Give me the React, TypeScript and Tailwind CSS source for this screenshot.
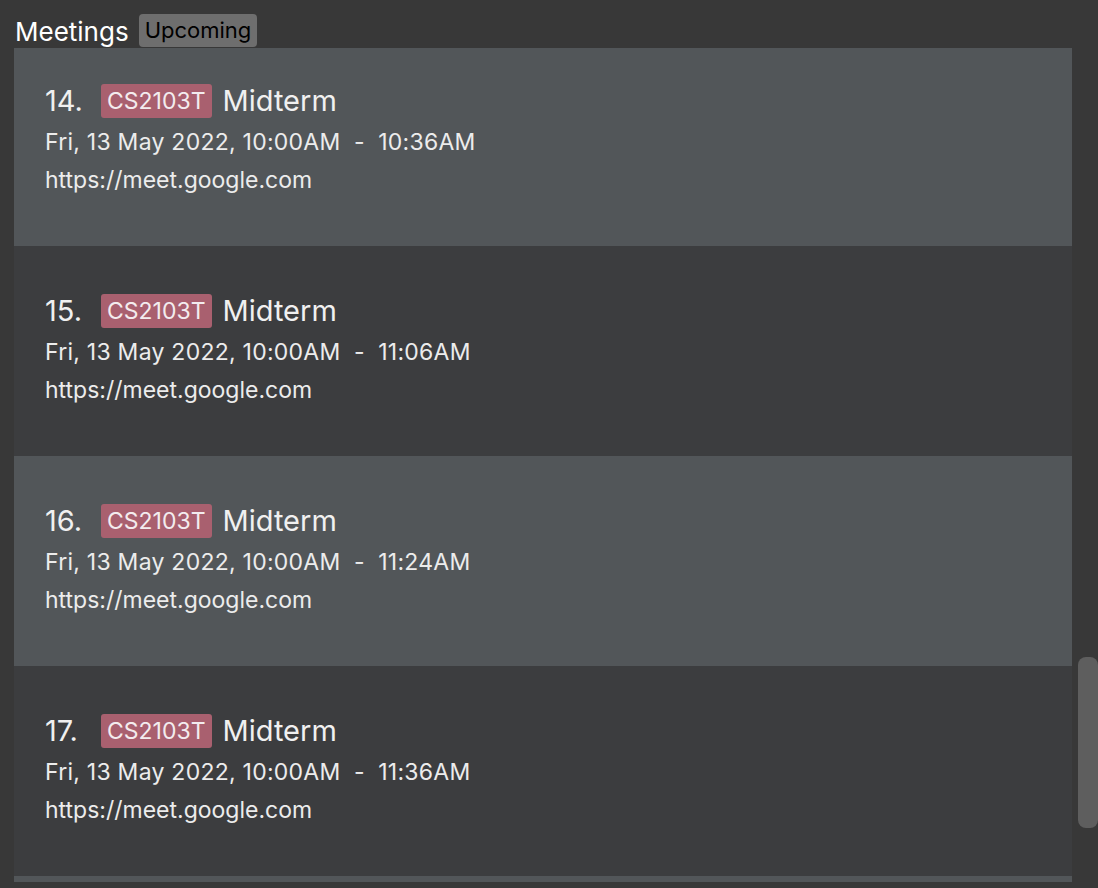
import React from 'react';

interface Meeting {
  index: number;
  module: string;
  title: string;
  date: string;
  start: string;
  end: string;
  link: string;
}

const meetings: Meeting[] = [
  { index: 14, module: 'CS2103T', title: 'Midterm', date: 'Fri, 13 May 2022', start: '10:00AM', end: '10:36AM', link: 'https://meet.google.com' },
  { index: 15, module: 'CS2103T', title: 'Midterm', date: 'Fri, 13 May 2022', start: '10:00AM', end: '11:06AM', link: 'https://meet.google.com' },
  { index: 16, module: 'CS2103T', title: 'Midterm', date: 'Fri, 13 May 2022', start: '10:00AM', end: '11:24AM', link: 'https://meet.google.com' },
  { index: 17, module: 'CS2103T', title: 'Midterm', date: 'Fri, 13 May 2022', start: '10:00AM', end: '11:36AM', link: 'https://meet.google.com' },
];

function MeetingCard({ meeting, odd }: { meeting: Meeting; odd: boolean }) {
  return (
    <div className={`h-[210px] shrink-0 pl-[31px] pt-[45px] ${odd ? 'bg-[#3c3d3f]' : 'bg-[#525659]'}`}>
      <div className="flex h-[40px] items-center">
        <span className="w-[56px] text-[29px] text-[#f0f0f0]">{meeting.index}.</span>
        <span className="rounded-[3px] bg-[#a9606f] px-[6px] text-[23px] leading-[34px] text-[#f3ecee]">
          {meeting.module}
        </span>
        <span className="ml-[11px] text-[29px] text-[#f0f0f0]">{meeting.title}</span>
      </div>
      <div className="mt-[2px] text-[23px] leading-[38px] tracking-[0.25px] text-[#ececec]">
        {meeting.date}, {meeting.start}&nbsp;&nbsp;-&nbsp;&nbsp;{meeting.end}
      </div>
      <div className="text-[23px] leading-[38px] text-[#ececec]">{meeting.link}</div>
    </div>
  );
}

export default function App() {
  return (
    <div className="flex h-[888px] w-[1098px] flex-col overflow-hidden bg-[#383838] font-['Inter',sans-serif]">
      {/* Header */}
      <div className="flex h-[48px] items-end pl-[15px]">
        <span className="text-[26px] leading-[32px] text-white">Meetings</span>
        <span className="mb-[1px] ml-[10px] rounded-[4px] bg-[#6e6e6e] px-[6px] text-[22px] leading-[33px] text-black">
          Upcoming
        </span>
      </div>

      {/* List + scrollbar */}
      <div className="flex h-[834px]">
        <div className="ml-[14px] flex w-[1058px] flex-col overflow-hidden">
          <div className="-mt-[12px] flex flex-col">
            {meetings.map((m, i) => (
              <MeetingCard key={m.index} meeting={m} odd={i % 2 === 1} />
            ))}
            {/* top edge of the next card, scrolled out of view */}
            <div className="h-[6px] shrink-0 bg-[#525659]" />
          </div>
        </div>
        <div className="flex w-[26px] justify-end">
          <div className="mt-[609px] h-[171px] w-[20px] rounded-[8px] bg-[#5e5e5e]" />
        </div>
      </div>
    </div>
  );
}
